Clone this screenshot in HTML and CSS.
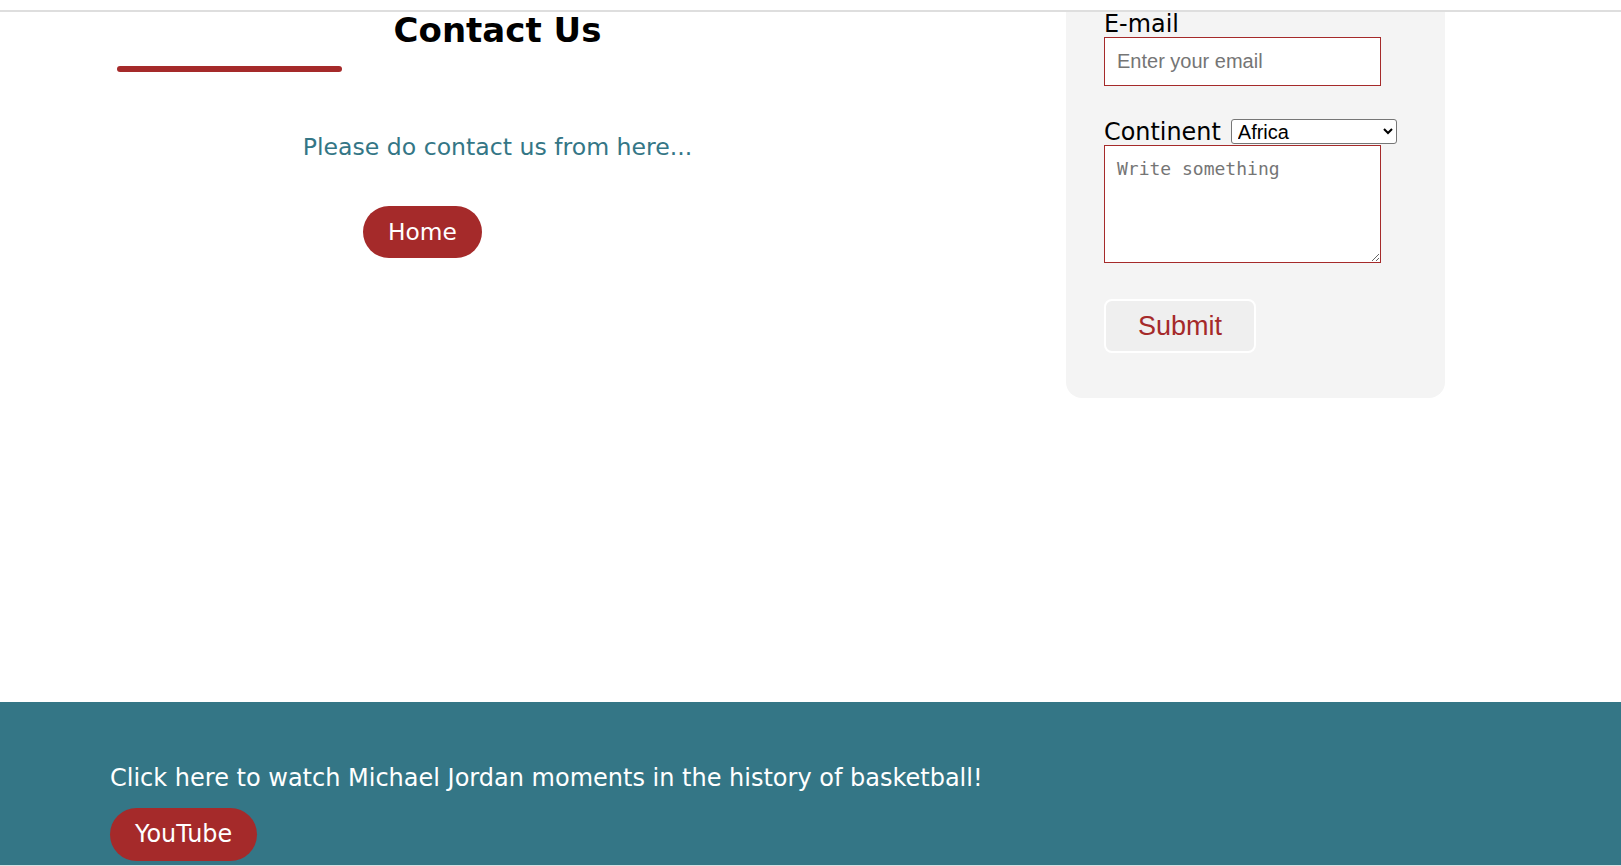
FILE: index.html
```html
<!DOCTYPE html>
<html lang="en">
<head>
<meta charset="utf-8">
<title>Contact Us</title>
<link rel="stylesheet" href="styles.css">
</head>
<body>
<div class="topbar"></div>
<main class="main">
  <section class="intro">
    <h1 class="title">Contact Us</h1>
    <div class="underline"></div>
    <p class="lead">Please do contact us from here...</p>
    <a class="pill home" href="#">Home</a>
  </section>
  <form class="panel">
    <label class="label email-label" for="email">E-mail</label>
    <input class="field" id="email" type="email" placeholder="Enter your email">
    <div class="row">
      <label class="label" for="continent">Continent</label>
      <select class="select" id="continent">
        <option>Africa</option>
        <option>Asia</option>
        <option>Europe</option>
      </select>
    </div>
    <textarea class="message" placeholder="Write something"></textarea>
    <button class="submit" type="button">Submit</button>
  </form>
</main>
<footer class="footer">
  <p class="footer-text">Click here to watch Michael Jordan moments in the history of basketball!</p>
  <a class="pill youtube" href="#">YouTube</a>
</footer>
</body>
</html>
```

FILE: styles.css
```css
* { box-sizing: border-box; }

html, body {
  margin: 0;
  padding: 0;
}

body {
  min-height: 100vh;
  display: flex;
  flex-direction: column;
  font-family: "DejaVu Sans", sans-serif;
  background: #ffffff;
  color: #000;
}

.topbar {
  height: 12px;
  border-bottom: 2px solid #dedede;
  flex: none;
}

.main {
  flex: 1;
  display: flex;
  align-items: flex-start;
  padding-left: 117px;
}

.intro {
  width: 761px;
  display: flex;
  flex-direction: column;
  align-items: flex-start;
}

.title {
  align-self: stretch;
  text-align: center;
  margin: 1px 0 0;
  font-size: 34px;
  line-height: 34px;
  font-weight: bold;
}

.underline {
  width: 225px;
  height: 6px;
  border-radius: 3px;
  background: #a52a2a;
  margin-top: 19px;
}

.lead {
  align-self: stretch;
  text-align: center;
  margin: 61px 0 0;
  font-size: 23.6px;
  line-height: 28px;
  color: #347686;
}

.pill {
  display: inline-block;
  background: #a52a2a;
  color: #fff;
  text-decoration: none;
  border-radius: 27px;
  padding: 12px 25px;
  line-height: 28px;
}

.home {
  margin: 45px 0 0 246px;
  font-size: 23.3px;
}

.panel {
  width: 379px;
  margin-left: 188px;
  background: #f4f4f4;
  border-radius: 0 0 16px 16px;
  padding: 1px 38px 45px;
  display: flex;
  flex-direction: column;
  align-items: flex-start;
}

.label {
  font-size: 23.9px;
  line-height: 22px;
  color: #000;
}

.email-label {
  display: block;
}

.field {
  margin-top: 2px;
  width: 277px;
  height: 49px;
  border: 1px solid #a52a2a;
  border-radius: 0;
  padding: 0 12px;
  font-family: "Liberation Sans", Arial, sans-serif;
  font-size: 20px;
  background: #fff;
  outline: none;
}

.field::placeholder {
  color: #757575;
}

.row {
  margin-top: 33px;
  display: flex;
  align-items: center;
  gap: 10px;
  height: 25px;
}

.select {
  width: 166px;
  height: 25px;
  font-family: "Liberation Sans", Arial, sans-serif;
  font-size: 20px;
  border: 1px solid #767676;
  border-radius: 3px;
  background: #fff;
  color: #000;
  padding: 0 2px;
}

.message {
  display: block;
  margin: 1px 0 0;
  width: 277px;
  height: 118px;
  border: 1px solid #a52a2a;
  padding: 12px;
  font-family: "DejaVu Sans Mono", monospace;
  font-size: 18px;
  line-height: 21px;
  background: #fff;
  resize: vertical;
  outline: none;
}

.message::placeholder {
  color: #757575;
}

.submit {
  margin-top: 36px;
  width: 152px;
  height: 54px;
  background: #efefef;
  border: 2px solid #ffffff;
  border-radius: 8px;
  font-family: "Liberation Sans", Arial, sans-serif;
  font-size: 27px;
  color: #a52a2a;
  padding: 0;
}

.footer {
  flex: none;
  background: #347686;
  padding: 62px 0 4px 110px;
  border-bottom: 1px solid #d9dfe1;
}

.footer-text {
  margin: 0;
  color: #fff;
  font-size: 24px;
  line-height: 28px;
}

.youtube {
  margin-top: 16px;
  font-size: 23.9px;
  padding: 12px 25px 13px;
}
```
